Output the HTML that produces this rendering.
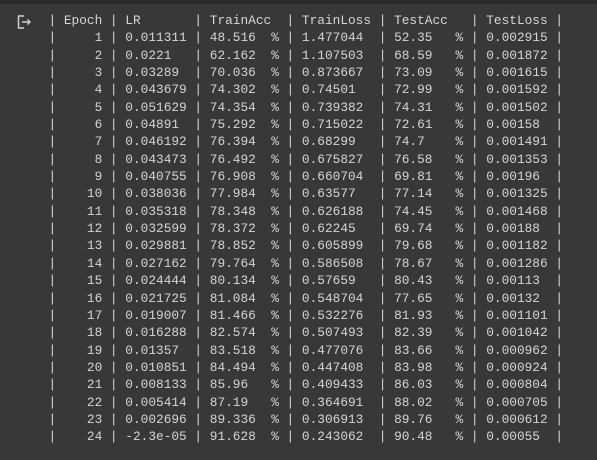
<!DOCTYPE html>
<html><head><style>
html,body{margin:0;padding:0;width:597px;height:460px;background:#383838;overflow:hidden}
.top{position:absolute;left:0;top:0;width:597px;height:4px;background:#2a2a2a}
pre{position:absolute;left:48.5px;top:12px;margin:0;font-family:"Liberation Mono",monospace;font-size:12.8px;line-height:17.35px;color:#d5d5d5;letter-spacing:0}
svg{position:absolute;left:16px;top:14px}
</style></head><body>
<div class="top"></div>
<svg width="18" height="16" viewBox="0 0 18 16"><path d="M8 2H2.5v12H8M2.5 2" fill="none" stroke="#cfcfcf" stroke-width="1.5"/><path d="M6 8h8M11.5 5.5L14 8l-2.5 2.5" fill="none" stroke="#cfcfcf" stroke-width="1.4"/></svg>
<pre>| Epoch | LR       | TrainAcc  | TrainLoss | TestAcc   | TestLoss |
|     1 | 0.011311 | 48.516  % | 1.477044  | 52.35   % | 0.002915 |
|     2 | 0.0221   | 62.162  % | 1.107503  | 68.59   % | 0.001872 |
|     3 | 0.03289  | 70.036  % | 0.873667  | 73.09   % | 0.001615 |
|     4 | 0.043679 | 74.302  % | 0.74501   | 72.99   % | 0.001592 |
|     5 | 0.051629 | 74.354  % | 0.739382  | 74.31   % | 0.001502 |
|     6 | 0.04891  | 75.292  % | 0.715022  | 72.61   % | 0.00158  |
|     7 | 0.046192 | 76.394  % | 0.68299   | 74.7    % | 0.001491 |
|     8 | 0.043473 | 76.492  % | 0.675827  | 76.58   % | 0.001353 |
|     9 | 0.040755 | 76.908  % | 0.660704  | 69.81   % | 0.00196  |
|    10 | 0.038036 | 77.984  % | 0.63577   | 77.14   % | 0.001325 |
|    11 | 0.035318 | 78.348  % | 0.626188  | 74.45   % | 0.001468 |
|    12 | 0.032599 | 78.372  % | 0.62245   | 69.74   % | 0.00188  |
|    13 | 0.029881 | 78.852  % | 0.605899  | 79.68   % | 0.001182 |
|    14 | 0.027162 | 79.764  % | 0.586508  | 78.67   % | 0.001286 |
|    15 | 0.024444 | 80.134  % | 0.57659   | 80.43   % | 0.00113  |
|    16 | 0.021725 | 81.084  % | 0.548704  | 77.65   % | 0.00132  |
|    17 | 0.019007 | 81.466  % | 0.532276  | 81.93   % | 0.001101 |
|    18 | 0.016288 | 82.574  % | 0.507493  | 82.39   % | 0.001042 |
|    19 | 0.01357  | 83.518  % | 0.477076  | 83.66   % | 0.000962 |
|    20 | 0.010851 | 84.494  % | 0.447408  | 83.98   % | 0.000924 |
|    21 | 0.008133 | 85.96   % | 0.409433  | 86.03   % | 0.000804 |
|    22 | 0.005414 | 87.19   % | 0.364691  | 88.02   % | 0.000705 |
|    23 | 0.002696 | 89.336  % | 0.306913  | 89.76   % | 0.000612 |
|    24 | -2.3e-05 | 91.628  % | 0.243062  | 90.48   % | 0.00055  |</pre>
</body></html>
